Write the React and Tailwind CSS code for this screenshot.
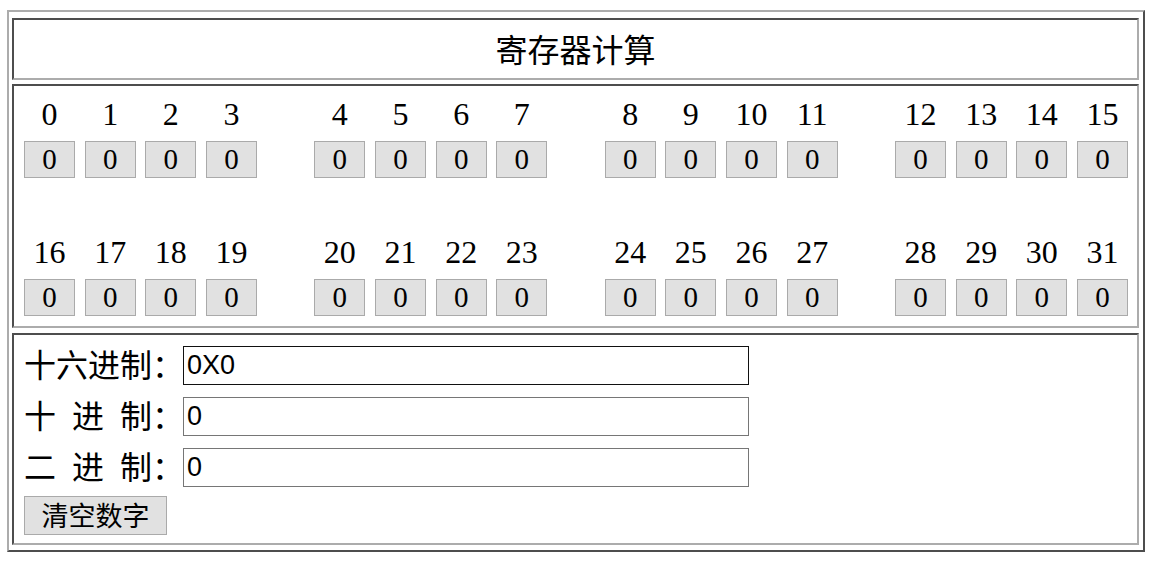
import React from "react";

const ROWS = [
  [0, 1, 2, 3, 4, 5, 6, 7, 8, 9, 10, 11, 12, 13, 14, 15],
  [16, 17, 18, 19, 20, 21, 22, 23, 24, 25, 26, 27, 28, 29, 30, 31],
];

const cell =
  "border-2 border-t-[#4d4d4d] border-l-[#4d4d4d] border-r-[#acacac] border-b-[#acacac]";

function BitGroup({ bits }) {
  return (
    <div className="grid grid-cols-4 gap-x-[9.67px]">
      {bits.map((b) => (
        <div key={b} className="flex w-[51px] flex-col items-center">
          <div className="flex h-[40px] items-center justify-center whitespace-nowrap font-['Liberation_Serif',serif] text-[32px] leading-none">
            {b}
          </div>
          <button className="mt-[7px] flex h-[37px] w-[51px] items-center justify-center border border-[#aaaaaa] bg-[#e1e1e1] font-['Liberation_Serif',serif] text-[29px] leading-none">
            0
          </button>
        </div>
      ))}
    </div>
  );
}

function BitRow({ bits }) {
  const groups = [bits.slice(0, 4), bits.slice(4, 8), bits.slice(8, 12), bits.slice(12, 16)];
  return (
    <div className="flex justify-between pl-[10px] pr-[9px]">
      {groups.map((g, i) => (
        <BitGroup key={i} bits={g} />
      ))}
    </div>
  );
}

function Field({ chars, value, focused }) {
  return (
    <div className="flex h-[39px] items-center">
      <div className="flex items-center pb-[5px] font-['Noto_Sans_CJK_SC',sans-serif] text-[32px] leading-none">
        <div className="flex w-[128px] justify-between">
          {chars.map((c, i) => (
            <span key={i}>{c}</span>
          ))}
        </div>
        <span className="w-[31px]">：</span>
      </div>
      <input
        readOnly
        value={value}
        className={
          "h-[39px] w-[566px] border bg-white px-[3px] font-['Liberation_Sans',sans-serif] text-[27px] leading-none outline-none " +
          (focused ? "border-[#111111]" : "border-[#767676]")
        }
      />
    </div>
  );
}

export default function App() {
  return (
    <div className="h-[561px] bg-white pl-[7px] pt-[10px]">
      <div className="flex h-[542px] w-[1138px] flex-col border-2 border-t-[#acacac] border-l-[#acacac] border-r-[#4d4d4d] border-b-[#4d4d4d] pb-[5px] pl-[3px] pr-[4px] pt-[6px]">
        <div className={`${cell} flex h-[62px] items-center justify-center pb-[2px] font-['Noto_Sans_CJK_SC',sans-serif] text-[32px] leading-none`}>
          寄存器计算
        </div>

        <div className={`${cell} mt-[4px] flex h-[244px] flex-col pt-[8px]`}>
          <BitRow bits={ROWS[0]} />
          <div className="mt-[54px]">
            <BitRow bits={ROWS[1]} />
          </div>
        </div>

        <div className={`${cell} mt-[5px] flex h-[212px] flex-col gap-[12px] pl-[10px] pt-[11px]`}>
          <Field chars={["十", "六", "进", "制"]} value="0X0" focused />
          <Field chars={["十", "进", "制"]} value="0" />
          <Field chars={["二", "进", "制"]} value="0" />
          <button className="-mt-[3px] h-[39px] w-[143px] border border-[#aaaaaa] bg-[#e1e1e1] pb-[3px] font-['Noto_Sans_CJK_SC',sans-serif] text-[27px] leading-none">
            清空数字
          </button>
        </div>
      </div>
    </div>
  );
}
